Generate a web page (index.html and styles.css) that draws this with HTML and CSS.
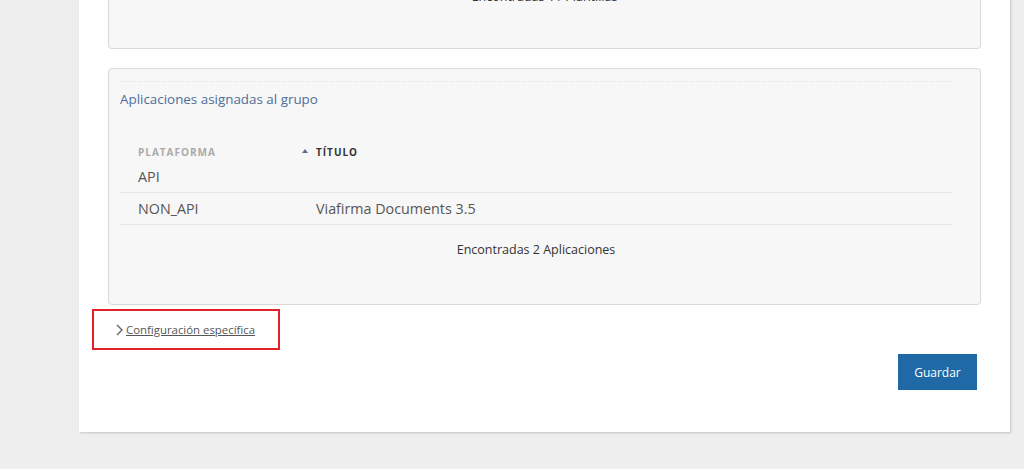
FILE: index.html
```html
<!DOCTYPE html>
<html lang="es">
<head>
<meta charset="utf-8">
<title>Grupo</title>
<link rel="stylesheet" href="styles.css">
</head>
<body>
<div class="page">
  <section class="panel panel-top">
    <p class="count">Encontradas 11 Plantillas</p>
  </section>

  <section class="panel panel-apps">
    <div class="panel-head">
      <h2 class="panel-title">Aplicaciones asignadas al grupo</h2>
    </div>
    <table class="grid">
      <colgroup>
        <col class="c-plat">
        <col>
      </colgroup>
      <thead>
        <tr>
          <th>Plataforma</th>
          <th class="sorted"><span class="sort-arrow"></span>Título</th>
        </tr>
      </thead>
      <tbody>
        <tr><td>API</td><td></td></tr>
        <tr><td>NON_API</td><td>Viafirma Documents 3.5</td></tr>
      </tbody>
    </table>
    <p class="count count-apps">Encontradas 2 Aplicaciones</p>
  </section>

  <div class="highlight">
    <a class="toggle" href="#"><svg class="chev" width="7" height="12" viewBox="0 0 7 12"><path d="M1 1 L6 6 L1 11" fill="none" stroke="#666" stroke-width="1.4"/></svg><span>Configuración específica</span></a>
  </div>

  <div class="actions">
    <button class="btn-primary" type="button">Guardar</button>
  </div>
</div>
</body>
</html>
```

FILE: styles.css
```css
html, body {
  margin: 0;
  padding: 0;
}
body {
  background: #eeeeee;
  font-family: "Open Sans", "Noto Sans", sans-serif;
  color: #333;
  height: 469px;
  overflow: hidden;
}
.page {
  margin: -20px 0 0 79px;
  width: 931px;
  box-sizing: border-box;
  background: #fff;
  padding: 0 29px 42px;
  box-shadow: 1px 1px 2px rgba(0,0,0,0.18);
}
.panel {
  background: #f7f7f7;
  border: 1px solid #d9d9d9;
  border-radius: 4px;
}
.panel-top {
  border-top: none;
  border-radius: 0 0 4px 4px;
  padding: 8px 0 42px;
}
.count {
  margin: 0;
  font-size: 12.5px;
  line-height: 18px;
  text-align: center;
  color: #333;
}
.panel-apps {
  margin-top: 19px;
  padding: 12px 28px 45px 11px;
}
.panel-head {
  padding-top: 9px;
  background-image: linear-gradient(to right, #dcdcdc 50%, transparent 50%);
  background-size: 3px 1px;
  background-repeat: repeat-x;
  background-position: 0 0;
}
.panel-title {
  margin: 0;
  font-size: 13.4px;
  line-height: 18px;
  font-weight: 400;
  color: #4e6e99;
}
.grid {
  width: 100%;
  margin-top: 29px;
  border-collapse: collapse;
  table-layout: fixed;
}
.c-plat {
  width: 196px;
}
.grid th {
  text-align: left;
  font-size: 10px;
  line-height: 14px;
  font-weight: 700;
  letter-spacing: 1px;
  text-transform: uppercase;
  padding: 8px 18px 2px;
  color: #aaaaaa;
}
.grid th.sorted {
  color: #333;
  position: relative;
  padding-left: 0;
}
.sort-arrow {
  position: absolute;
  left: -14px;
  top: 12px;
  width: 0;
  height: 0;
  border-left: 3.5px solid transparent;
  border-right: 3.5px solid transparent;
  border-bottom: 4px solid #5a6d88;
}
.grid td {
  font-size: 14.3px;
  line-height: 20px;
  color: #555;
  padding: 6px 18px 5px;
  border-bottom: 1px solid #e6e6e6;
}
.grid td + td {
  padding-left: 0;
}
.count-apps {
  margin-top: 16px;
}
.highlight {
  margin: 4px 0 0 -16px;
  width: 188px;
  height: 41px;
  box-sizing: border-box;
  border: 2px solid #e0232b;
  display: flex;
  align-items: center;
  padding-left: 22px;
}
.toggle {
  display: flex;
  align-items: center;
  gap: 3px;
  font-size: 11.4px;
  line-height: 16px;
  color: #555;
  text-decoration: underline;
}
.chev {
  display: block;
}
.actions {
  display: flex;
  justify-content: flex-end;
  margin-top: 4px;
  padding-right: 4px;
}
.btn-primary {
  width: 79px;
  height: 36px;
  border: none;
  border-radius: 0;
  background: #1f69a6;
  color: #fff;
  font-family: "Open Sans", "Noto Sans", sans-serif;
  font-size: 12px;
  cursor: pointer;
}
```
